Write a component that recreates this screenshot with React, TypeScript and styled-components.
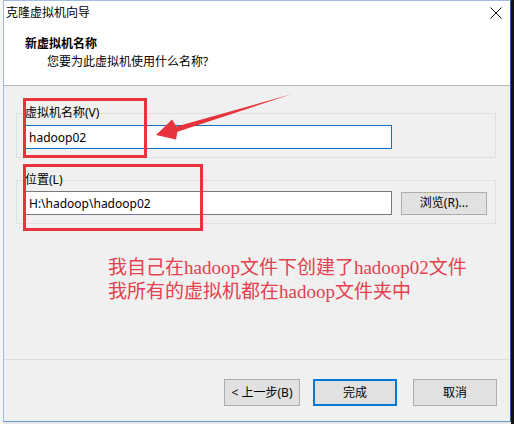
import React from "react";
import styled, { createGlobalStyle } from "styled-components";

const GlobalStyle = createGlobalStyle`
  html, body { margin: 0; padding: 0; background: #ececec; }
  #root { width: 514px; height: 424px; overflow: hidden; }
  * { box-sizing: border-box; }
`;

const UI_FONT = `"Noto Sans", "Noto Sans CJK SC", sans-serif`;

const Page = styled.div`
  display: flex;
  width: 514px;
  height: 424px;
  background: #e9e9e9;
  font-family: ${UI_FONT};
  font-size: 12px;
  color: #000;
`;

const LeftStrip = styled.div`
  width: 3px;
  height: 424px;
  background: #f6f6f6;
`;

const RightStrip = styled.div`
  width: 3px;
  height: 424px;
  background: #121212;
`;

const Window = styled.div`
  position: relative;
  width: 508px;
  height: 422px;
  display: flex;
  flex-direction: column;
  background: #f0f0f0;
  border: 1px solid #9dbde6;
  border-right-color: #2b5c9c;
  border-bottom-color: #6c98d2;
`;

const TitleBar = styled.div`
  height: 24px;
  flex: none;
  display: flex;
  align-items: center;
  justify-content: space-between;
  padding: 0 8px 0 2px;
  background: #fff;
  line-height: 24px;
`;

const Header = styled.div`
  height: 61px;
  flex: none;
  padding: 10px 0 0 21px;
  background: #fff;
  border-bottom: 1px solid #b9b9b9;
`;

const HeaderTitle = styled.div`
  font-weight: bold;
  line-height: 18px;
`;

const HeaderSub = styled.div`
  line-height: 18px;
  padding-left: 22px;
`;

const Body = styled.div`
  flex: 1;
  padding: 27px 14px 0 12px;
`;

const Group = styled.div<{ $top: number }>`
  margin-top: ${(p) => p.$top}px;
  border: 1px solid #e0e0e0;
  padding: 0 8px 8px 8px;
`;

const GroupLabel = styled.div<{ $after: number }>`
  margin-top: -9px;
  height: 16px;
  line-height: 16px;
  margin-bottom: ${(p) => p.$after}px;
`;

const Row = styled.div`
  display: flex;
  align-items: center;
  gap: 9px;
`;

const TextBox = styled.input<{ $focused?: boolean }>`
  width: 367px;
  height: 24px;
  padding: 0 3px;
  margin: 0;
  border: 1px solid ${(p) => (p.$focused ? "#1c6fbd" : "#7a7a7a")};
  background: #fff;
  font-family: ${UI_FONT};
  font-size: 12px;
  color: #000;
  outline: none;
`;

const Button = styled.button<{ $w: number; $h: number; $focused?: boolean; $before?: number }>`
  width: ${(p) => p.$w}px;
  height: ${(p) => p.$h}px;
  margin: 0 0 0 ${(p) => p.$before ?? 0}px;
  padding: 0;
  background: #e1e1e1;
  border: 1px solid ${(p) => (p.$focused ? "#0078d7" : "#adadad")};
  box-shadow: ${(p) => (p.$focused ? "inset 0 0 0 1px #0078d7" : "none")};
  font-family: ${UI_FONT};
  font-size: 12px;
  color: #000;
  line-height: 1;
`;

const Note = styled.div`
  margin-top: 32px;
  padding-left: 92px;
  font-family: "Liberation Serif", "Noto Sans CJK SC", serif;
  font-size: 19px;
  line-height: 24px;
  color: #e4404d;
  white-space: nowrap;
`;

const Footer = styled.div`
  height: 62px;
  flex: none;
  display: flex;
  justify-content: flex-end;
  align-items: flex-start;
  padding: 19px 13px 0 0;
  border-top: 1px solid #dcdcdc;
`;

const Annotation = styled.div<{ $l: number; $t: number; $w: number; $h: number }>`
  position: absolute;
  left: ${(p) => p.$l}px;
  top: ${(p) => p.$t}px;
  width: ${(p) => p.$w}px;
  height: ${(p) => p.$h}px;
  border: 3px solid #e8323c;
  pointer-events: none;
`;

const Overlay = styled.svg`
  position: absolute;
  left: 0;
  top: 0;
  pointer-events: none;
`;

const CloseIcon = () => (
  <svg width="12" height="12" viewBox="0 0 12 12">
    <path d="M0.5 0.5 L11.5 11.5 M11.5 0.5 L0.5 11.5" stroke="#111" strokeWidth="1" fill="none" />
  </svg>
);

export default function App() {
  return (
    <>
      <GlobalStyle />
      <Page>
        <LeftStrip />
        <Window>
          <TitleBar>
            <span>克隆虚拟机向导</span>
            <CloseIcon />
          </TitleBar>
          <Header>
            <HeaderTitle>新虚拟机名称</HeaderTitle>
            <HeaderSub>您要为此虚拟机使用什么名称?</HeaderSub>
          </Header>
          <Body>
            <Group $top={0}>
              <GroupLabel $after={4}>虚拟机名称(V)</GroupLabel>
              <Row>
                <TextBox $focused readOnly defaultValue="hadoop02" />
              </Row>
            </Group>
            <Group $top={22}>
              <GroupLabel $after={3}>位置(L)</GroupLabel>
              <Row>
                <TextBox readOnly defaultValue="H:\hadoop\hadoop02" />
                <Button $w={86} $h={23}>浏览(R)...</Button>
              </Row>
            </Group>
            <Note>
              我自己在hadoop文件下创建了hadoop02文件
              <br />
              我所有的虚拟机都在hadoop文件夹中
            </Note>
          </Body>
          <Footer>
            <Button $w={76} $h={27}>&lt; 上一步(B)</Button>
            <Button $w={84} $h={27} $before={13} $focused>完成</Button>
            <Button $w={84} $h={27} $before={16}>取消</Button>
          </Footer>

          <Annotation $l={19} $t={97} $w={124} $h={60} />
          <Annotation $l={19} $t={163} $w={180} $h={67} />
          <Overlay width="506" height="420" viewBox="4 1 506 420">
            <polygon
              points="156,135 172,119.5 176.5,126.5 292,94 177.5,131.8 176,139.5"
              fill="#e8333c"
            />
          </Overlay>
        </Window>
        <RightStrip />
      </Page>
    </>
  );
}
